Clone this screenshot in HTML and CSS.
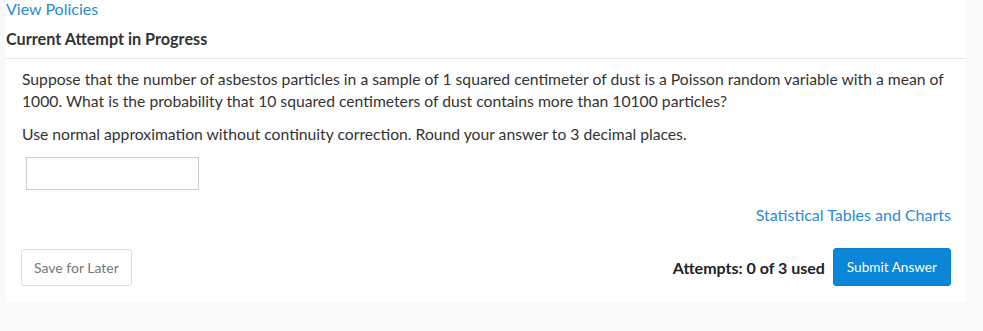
FILE: index.html
```html
<!DOCTYPE html>
<html lang="en">
<head>
    <meta charset="UTF-8">
    <title>Current Attempt in Progress</title>
    <link rel="stylesheet" href="styles.css">
</head>
<body>
    <div class="panel">
        <a class="policies-link" href="#">View Policies</a>
        <div class="attempt-title">Current Attempt in Progress</div>

        <div class="question">
            <p>Suppose that the number of asbestos particles in a sample of 1 squared centimeter of dust is a Poisson random variable with a mean of 1000. What is the probability that 10 squared centimeters of dust contains more than 10100 particles?</p>
            <p>Use normal approximation without continuity correction. Round your answer to 3 decimal places.</p>
            <input type="text" class="answer-input">

            <div class="tables-row">
                <a class="tables-link" href="#">Statistical Tables and Charts</a>
            </div>

            <div class="actions">
                <button type="button" class="save-button">Save for Later</button>
                <div class="submit-group">
                    <span class="attempts">Attempts: 0 of 3 used</span>
                    <button type="button" class="submit-button">Submit Answer</button>
                </div>
            </div>
        </div>
    </div>
</body>
</html>
```

FILE: styles.css
```css
body {
    margin: 0;
    padding: 0 0 0 6px;
    background: #F9F9F9;
    font-family: Lato, "Open Sans", sans-serif;
    color: #333333;
}

.panel {
    width: 960px;
    background: #FFFFFF;
    padding-bottom: 16px;
}

.policies-link {
    display: block;
    color: #2A8AD4;
    font-size: 16px;
    line-height: 18px;
    text-decoration: none;
}

.attempt-title {
    font-size: 16.2px;
    font-weight: bold;
    line-height: 20px;
    padding: 11px 0 9px 0;
    border-bottom: 1px solid #E8E8E8;
}

.question {
    padding: 9px 15px 0 16px;
}

.question p {
    margin: 0 0 11px 0;
    font-size: 15.7px;
    line-height: 22px;
}

.answer-input {
    display: block;
    width: 173px;
    height: 33px;
    box-sizing: border-box;
    margin: 12px 0 0 4px;
    border: 1px solid #CCCCCC;
    border-radius: 0;
    padding: 0 8px;
    font-family: inherit;
}

.tables-row {
    display: flex;
    justify-content: flex-end;
    margin-top: 15px;
}

.tables-link {
    color: #2A8AD4;
    font-size: 16px;
    line-height: 20px;
    text-decoration: none;
}

.actions {
    display: flex;
    justify-content: space-between;
    align-items: center;
    margin-top: 23px;
}

.save-button {
    background: #FFFFFF;
    border: 1px solid #DDDDDD;
    border-radius: 3px;
    color: #777777;
    font-family: inherit;
    font-size: 14px;
    height: 37px;
    padding: 0 12px;
    margin-left: -1px;
}

.submit-group {
    display: flex;
    align-items: center;
    gap: 8px;
}

.attempts {
    font-size: 16px;
    font-weight: bold;
    color: #222222;
}

.submit-button {
    background: #0B86D8;
    border: 1px solid #0A7CC8;
    border-radius: 3px;
    color: #FFFFFF;
    font-family: inherit;
    font-size: 13.6px;
    height: 38px;
    padding: 0 13px;
}
```
